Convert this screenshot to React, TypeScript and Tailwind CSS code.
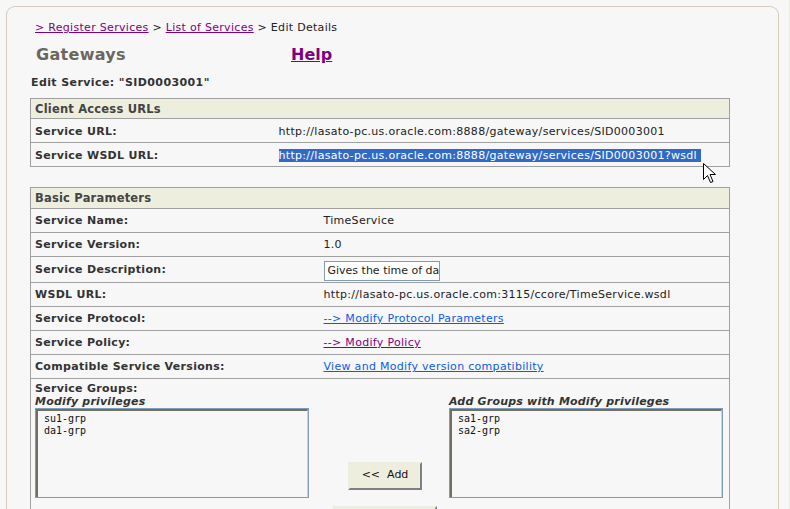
const FONT = "font-['Verdana','DejaVu_Sans',sans-serif]";

function Cursor() {
  return (
    <svg className="absolute left-[703px] top-[163px]" width="13" height="21" viewBox="0 0 13 21">
      <path d="M0.5 0.5 L0.5 16.5 L4.5 12.5 L7.5 19.5 L10 18.5 L7 11.5 L12.5 11.5 Z" fill="#fff" stroke="#000" strokeWidth="1" strokeLinejoin="miter" />
    </svg>
  );
}

function Row({ label, children, h = "h-[24px]" }: { label: string; children: React.ReactNode; h?: string }) {
  return (
    <tr className={`${h} border-t border-[#a0a0a0]`}>
      <td className="pl-[4px] pt-[3px] text-[11px] font-bold text-[#333] tracking-[0.3px] align-middle">{label}</td>
      <td className="pt-[3px] text-[11px] text-[#222] tracking-[0.3px] align-middle">{children}</td>
    </tr>
  );
}

function Listbox({ items }: { items: string[] }) {
  return (
    <div className="w-[274px] h-[90px] border border-[#7f9db9] bg-[#f7f7f7]">
      <div className="h-full border-t-2 border-l-2 border-[#716f64] border-r border-b-0 border-r-[#d4d0c8] pl-[6px] pt-[2px] font-['DejaVu_Sans_Mono',monospace] text-[10px] leading-[12px] text-[#111]">
        {items.map((i) => (
          <div key={i}>{i}</div>
        ))}
      </div>
    </div>
  );
}

export default function App() {
  return (
    <div className={`${FONT} relative w-[790px] h-[509px] overflow-hidden bg-[#f7f7f7]`}>
      <div className="absolute right-0 top-0 bottom-0 w-px bg-[#ecebd8]" />
      <div className="ml-[6px] mt-[6px] w-[773px] h-[520px] border border-b-0 border-[#d5ccb9] rounded-t-[9px] pl-[23px]">
        <div className="pl-[5px] pt-[14px] text-[11px] leading-[14px] text-[#222] tracking-[0.3px]">
          <a className="text-[#800080] underline">&gt; Register Services</a> &gt;{" "}
          <a className="text-[#800080] underline">List of Services</a> &gt; Edit Details
        </div>
        <div className="flex items-center h-[28px] mt-[6px] pl-[6px]">
          <div className="w-[255px] text-[16px] font-bold text-[#6b665f] tracking-[0.3px]">Gateways</div>
          <a className="text-[16px] font-bold text-[#800080] underline">Help</a>
        </div>
        <div className="mt-[7px] pl-[1px] text-[11px] leading-[14px] font-bold text-[#333] tracking-[0.4px]">
          Edit Service: "SID0003001"
        </div>

        <table className="mt-[8px] w-[700px] border border-[#a0a0a0] border-collapse">
          <tbody>
            <tr className="h-[20px] bg-[#eeeedf]">
              <td colSpan={2} className="pl-[4px] pt-[2px] text-[11.5px] font-bold text-[#444] tracking-[0.2px]">Client Access URLs</td>
            </tr>
            <tr className="h-[24px] border-t border-[#a0a0a0]">
              <td className="w-[248px] pl-[4px] pt-[3px] text-[11px] font-bold text-[#333] tracking-[0.3px]">Service URL:</td>
              <td className="pt-[3px] text-[11px] text-[#222] tracking-[0.3px]">http://lasato-pc.us.oracle.com:8888/gateway/services/SID0003001</td>
            </tr>
            <tr className="h-[24px] border-t border-[#a0a0a0]">
              <td className="pl-[4px] pt-[3px] text-[11px] font-bold text-[#333] tracking-[0.3px]">Service WSDL URL:</td>
              <td className="pt-[3px] text-[11px] tracking-[0.3px]">
                <span className="bg-[#316ac5] text-white pr-[4px]">http://lasato-pc.us.oracle.com:8888/gateway/services/SID0003001?wsdl</span>
              </td>
            </tr>
          </tbody>
        </table>

        <table className="mt-[20px] w-[700px] border border-[#a0a0a0] border-collapse">
          <tbody>
            <tr className="h-[20px] bg-[#eeeedf]">
              <td colSpan={2} className="pl-[4px] pt-[2px] text-[11.5px] font-bold text-[#444] tracking-[0.2px]">Basic Parameters</td>
            </tr>
            <tr className="h-[24px] border-t border-[#a0a0a0]">
              <td className="w-[293px] pl-[4px] pt-[3px] text-[11px] font-bold text-[#333] tracking-[0.3px]">Service Name:</td>
              <td className="pt-[3px] text-[11px] text-[#222] tracking-[0.3px]">TimeService</td>
            </tr>
            <Row label="Service Version:">1.0</Row>
            <Row label="Service Description:" h="h-[26px]">
              <div className="w-[116px] h-[20px] border border-[#7f9db9] bg-white overflow-hidden whitespace-nowrap pl-[3px] leading-[18px] text-[11px] tracking-normal">
                Gives the time of day
              </div>
            </Row>
            <Row label="WSDL URL:">http://lasato-pc.us.oracle.com:3115/ccore/TimeService.wsdl</Row>
            <Row label="Service Protocol:">
              <a className="text-[#0a5ce6] underline">--&gt; Modify Protocol Parameters</a>
            </Row>
            <Row label="Service Policy:">
              <a className="text-[#800080] underline">--&gt; Modify Policy</a>
            </Row>
            <Row label="Compatible Service Versions:">
              <a className="text-[#0a5ce6] underline">View and Modify version compatibility</a>
            </Row>
            <tr className="border-t border-[#a0a0a0]">
              <td colSpan={2} className="pl-[4px] pt-[3px] align-top">
                <div className="text-[11px] leading-[13px] font-bold text-[#333] tracking-[0.3px]">Service Groups:</div>
                <div className="flex">
                  <div>
                    <div className="text-[11px] leading-[13px] font-bold italic text-[#333] tracking-[0.2px]">Modify privileges</div>
                    <Listbox items={["su1-grp", "da1-grp"]} />
                  </div>
                  <div className="flex flex-col items-start w-[140px] pt-[67px]">
                    <button className="ml-[39px] w-[74px] h-[28px] bg-[#eeeedf] border-2 border-[#eeeedf] border-r-[#808080] border-b-[#808080] text-[11px] text-[#111] whitespace-pre">
                      {"<<  Add"}
                    </button>
                    <button className="ml-[24px] mt-[16px] w-[104px] h-[28px] bg-[#eeeedf] border-2 border-[#eeeedf] border-r-[#808080] border-b-[#808080] text-[11px] text-[#111] whitespace-pre">
                      {"Remove  >>"}
                    </button>
                  </div>
                  <div>
                    <div className="text-[11px] leading-[13px] font-bold italic text-[#333] tracking-[0.2px]">Add Groups with Modify privileges</div>
                    <Listbox items={["sa1-grp", "sa2-grp"]} />
                  </div>
                </div>
                <div className="h-[40px]" />
              </td>
            </tr>
          </tbody>
        </table>
      </div>
      <Cursor />
    </div>
  );
}
